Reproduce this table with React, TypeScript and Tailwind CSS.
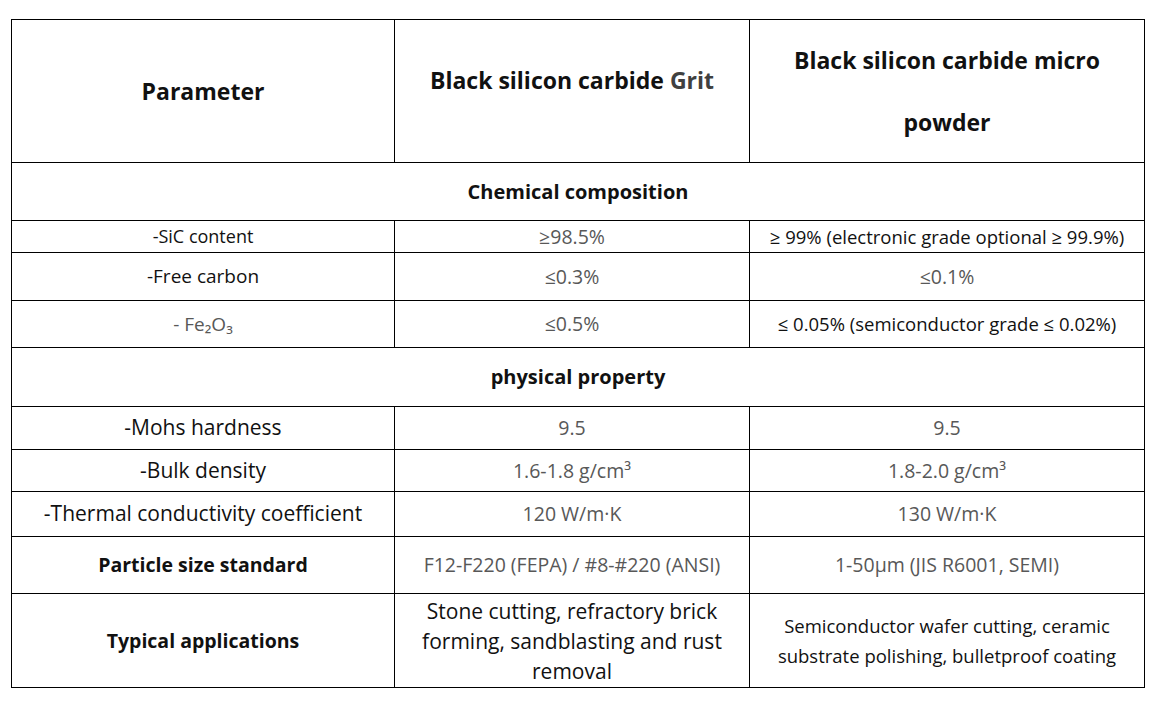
const black = 'text-[#111111]';
const gray = 'text-[#585858]';

type Cell = { text: React.ReactNode; cls?: string };

function Row({ h, cells }: { h: string; cells: Cell[] }) {
  return (
    <tr className={h}>
      {cells.map((c, i) => (
        <td key={i} className={`border border-black text-center align-middle px-1 ${c.cls ?? ''}`}>
          {c.text}
        </td>
      ))}
    </tr>
  );
}

function Section({ h, title }: { h: string; title: string }) {
  return (
    <tr className={h}>
      <td colSpan={3} className={`border border-black text-center align-middle font-bold text-[20px] ${black}`}>
        {title}
      </td>
    </tr>
  );
}

export default function App() {
  return (
    <div
      className="bg-white w-[1149px] h-[706px] pt-[19px] pl-[11px]"
      style={{ fontFamily: '"Open Sans", "Noto Sans", sans-serif' }}
    >
      <table className="border-collapse w-[1133px] table-fixed">
        <colgroup>
          <col className="w-[383px]" />
          <col className="w-[355px]" />
          <col className="w-[395px]" />
        </colgroup>
        <tbody>
          <tr className="h-[143px]">
            <td className={`border border-black text-center align-middle font-bold text-[23px] ${black}`}>
              Parameter
            </td>
            <td className={`border border-black text-center align-middle font-bold text-[23px] pb-[22px] ${black}`}>
              Black silicon carbide <span className="text-[#404040]">Grit</span>
            </td>
            <td className={`border border-black text-center align-middle font-bold text-[23px] leading-[62px] px-6 ${black}`}>
              Black silicon carbide micro powder
            </td>
          </tr>
          <Section h="h-[58px]" title="Chemical composition" />
          <Row
            h="h-[32px]"
            cells={[
              { text: '-SiC content', cls: `text-[18px] ${black}` },
              { text: '≥98.5%', cls: `text-[19.5px] ${gray}` },
              { text: '≥ 99% (electronic grade optional ≥ 99.9%)', cls: `text-[18.5px] ${black}` },
            ]}
          />
          <Row
            h="h-[48px]"
            cells={[
              { text: '-Free carbon', cls: `text-[19px] ${black}` },
              { text: '≤0.3%', cls: `text-[19.5px] ${gray}` },
              { text: '≤0.1%', cls: `text-[19.5px] ${gray}` },
            ]}
          />
          <Row
            h="h-[47px]"
            cells={[
              { text: '- Fe₂O₃', cls: `text-[19px] ${gray}` },
              { text: '≤0.5%', cls: `text-[19.5px] ${gray}` },
              { text: '≤ 0.05% (semiconductor grade ≤ 0.02%)', cls: `text-[18.5px] ${black}` },
            ]}
          />
          <Section h="h-[59px]" title="physical property" />
          <Row
            h="h-[43px]"
            cells={[
              { text: '-Mohs hardness', cls: `text-[21px] ${black}` },
              { text: '9.5', cls: `text-[19.5px] ${gray}` },
              { text: '9.5', cls: `text-[19.5px] ${gray}` },
            ]}
          />
          <Row
            h="h-[42px]"
            cells={[
              { text: '-Bulk density', cls: `text-[21px] ${black}` },
              { text: '1.6-1.8 g/cm³', cls: `text-[19.5px] ${gray}` },
              { text: '1.8-2.0 g/cm³', cls: `text-[19.5px] ${gray}` },
            ]}
          />
          <Row
            h="h-[45px]"
            cells={[
              { text: '-Thermal conductivity coefficient', cls: `text-[21px] ${black}` },
              { text: '120 W/m·K', cls: `text-[19.5px] ${gray}` },
              { text: '130 W/m·K', cls: `text-[19.5px] ${gray}` },
            ]}
          />
          <Row
            h="h-[57px]"
            cells={[
              { text: 'Particle size standard', cls: `text-[19.5px] font-bold ${black}` },
              { text: 'F12-F220 (FEPA) / #8-#220 (ANSI)', cls: `text-[19.5px] ${gray}` },
              { text: '1-50µm (JIS R6001, SEMI)', cls: `text-[19.5px] ${gray}` },
            ]}
          />
          <Row
            h="h-[94px]"
            cells={[
              { text: 'Typical applications', cls: `text-[19.5px] font-bold ${black}` },
              {
                text: (
                  <>
                    Stone cutting, refractory brick
                    <br />
                    forming, sandblasting and rust
                    <br />
                    removal
                  </>
                ),
                cls: `text-[21px] leading-[30px] whitespace-nowrap ${black}`,
              },
              {
                text: (
                  <>
                    Semiconductor wafer cutting, ceramic
                    <br />
                    substrate polishing, bulletproof coating
                  </>
                ),
                cls: `text-[18.5px] leading-[30px] whitespace-nowrap ${black}`,
              },
            ]}
          />
        </tbody>
      </table>
    </div>
  );
}
